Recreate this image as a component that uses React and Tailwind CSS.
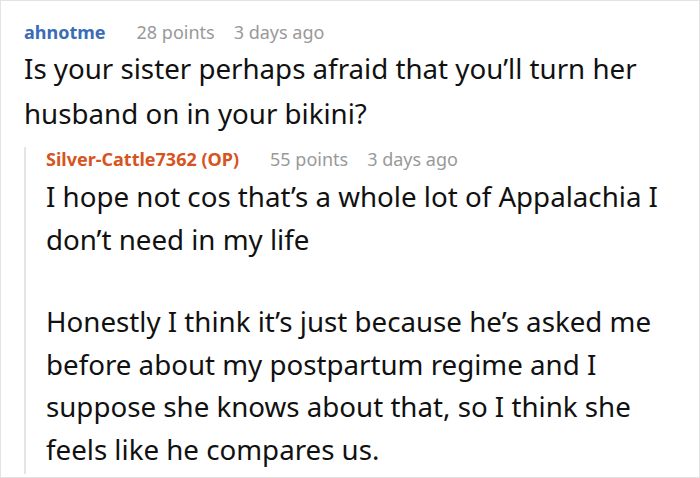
import React from 'react';

const Meta = ({ name, nameColor, points, ago }) => (
  <div className="flex items-baseline text-[18px] leading-[24px]">
    <span className={`font-bold ${nameColor}`}>{name}</span>
    <span className="text-[#999999] ml-[31px]">{points}</span>
    <span className="text-[#999999] ml-[19px]">{ago}</span>
  </div>
);

const App = () => {
  return (
    <div className="w-[700px] h-[478px] bg-white border border-[#e3e3e3] overflow-hidden" style={{ fontFamily: '"Noto Sans", sans-serif' }}>
      <div className="pl-[23px] pt-[19px]">
        <Meta name="ahnotme" nameColor="text-[#3a6db5]" points="28 points" ago="3 days ago" />
        <p className="text-[27.7px] leading-[45px] text-[#111111] mt-[2px] pr-[8px]">
          Is your sister perhaps afraid that you’ll turn her husband on in your bikini?
        </p>
        <div className="mt-[11px] border-l-2 border-[#e5e5e5] pl-[20px] pb-[4px]">
          <Meta name="Silver-Cattle7362 (OP)" nameColor="text-[#d6541d]" points="55 points" ago="3 days ago" />
          <p className="text-[27.7px] leading-[43px] text-[#111111] mt-[4px] pr-[8px]">
            I hope not cos that’s a whole lot of Appalachia I don’t need in my life
          </p>
          <p className="text-[27.7px] leading-[42.5px] text-[#111111] mt-[39px] pr-[8px]">
            Honestly I think it’s just because he’s asked me before about my postpartum regime and I suppose she knows about that, so I think she feels like he compares us.
          </p>
        </div>
      </div>
    </div>
  );
};

export default App;
